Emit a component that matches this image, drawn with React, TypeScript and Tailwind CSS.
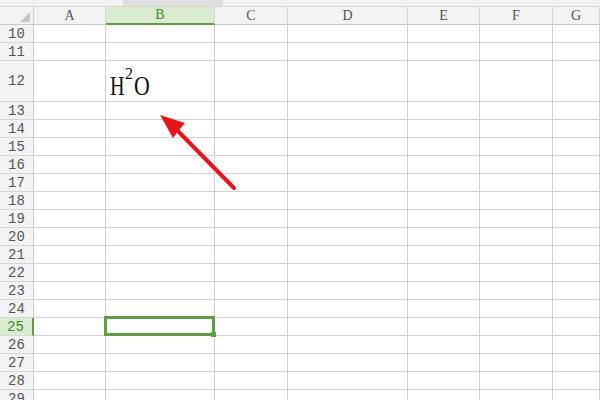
import React from "react";

const cols = ["A", "B", "C", "D", "E", "F", "G"];
const rows = [10, 11, 12, 13, 14, 15, 16, 17, 18, 19, 20, 21, 22, 23, 24, 25, 26, 27, 28, 29];
const colW = ["w-[72px]", "w-[109px]", "w-[73px]", "w-[120px]", "w-[72px]", "w-[73px]", "flex-1"];

export default function App() {
  return (
    <div className="relative w-[600px] h-[400px] overflow-hidden bg-white" style={{ fontFamily: '"Liberation Mono", monospace' }}>
      {/* top strip */}
      <div className="flex h-[7px] bg-[#f1f1f1] border-b border-[#d6d6d6]">
        <div className="w-[123px]" />
        <div className="w-[100px] bg-[#dedede]" />
        <div className="flex-1" />
      </div>
      {/* column header */}
      <div className="flex h-[18px] bg-[#f3f3f3] border-b border-[#c8c8c8]">
        <div className="relative w-[34px] shrink-0 border-r border-[#cfcfcf]">
          <svg className="absolute left-[20px] top-[5px]" width="10" height="10" viewBox="0 0 10 10">
            <polygon points="10,0 10,10 0,10" fill="#c6c6c6" />
          </svg>
        </div>
        {cols.map((c, i) => (
          <div
            key={c}
            className={`${colW[i]} shrink-0 flex items-center justify-center text-[14px] leading-none border-r border-[#d6d6d6] ${
              c === "B" ? "bg-[#d9ecd0] text-[#3d8a2a] border-b-2 border-b-[#5f9e45] -mb-[1px]" : "text-[#555]"
            }`}
            style={{ fontFamily: '"Liberation Serif", serif' }}
          >
            {c}
          </div>
        ))}
      </div>
      {rows.map((r) => {
        const h = r === 12 ? "h-[41px]" : "h-[18px]";
        const sel = r === 25;
        return (
          <div key={r} className={`flex ${h}`}>
            <div
              className={`w-[34px] shrink-0 flex items-center justify-center text-[14px] leading-none border-b border-[#d6d6d6] ${
                sel ? "bg-[#d9ecd0] text-[#3d8a2a] border-r-2 border-r-[#5f9e45] pr-[1px]" : "bg-[#f3f3f3] text-[#555] border-r border-r-[#cfcfcf]"
              }`}
            >
              {r}
            </div>
            {cols.map((c, i) => (
              <div key={c} className={`${colW[i]} shrink-0 relative border-r border-b border-[#d2d2d2]`}>
                {r === 12 && c === "B" && (
                  <div
                    className="absolute left-[4px] top-[11px] flex items-start text-[#111] leading-none"
                    style={{ fontFamily: '"Liberation Serif", serif' }}
                  >
                    <span className="text-[28px] inline-block scale-x-[0.72] origin-left w-[15px]">H</span>
                    <span className="text-[16px] inline-block -translate-y-[6px] origin-left w-[9px]">2</span>
                    <span className="text-[28px] inline-block scale-x-[0.78] origin-left">O</span>
                  </div>
                )}
                {sel && c === "B" && (
                  <div className="absolute -left-[2px] -top-[2px] -right-[1px] -bottom-[1px] border-[3px] border-[#5f9e45] z-10">
                    <div className="absolute -right-[4px] -bottom-[4px] w-[5px] h-[5px] bg-[#5f9e45]" />
                  </div>
                )}
              </div>
            ))}
          </div>
        );
      })}
      {/* arrow */}
      <svg className="absolute left-0 top-0 pointer-events-none" width="600" height="400" viewBox="0 0 600 400">
        <line x1="234" y1="188" x2="175" y2="128" stroke="#e8141b" strokeWidth="4" strokeLinecap="round" />
        <polygon points="160,115 185,123 180,129 173,138" fill="#e8141b" />
      </svg>
    </div>
  );
}
